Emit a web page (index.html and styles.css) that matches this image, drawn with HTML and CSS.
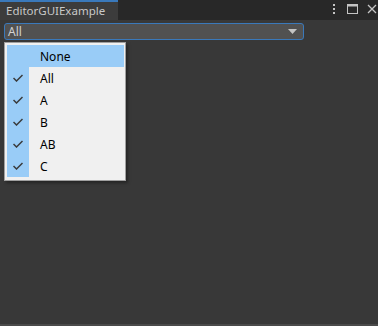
FILE: index.html
```html
<!DOCTYPE html>
<html lang="en">
<head>
    <meta charset="UTF-8">
    <meta name="viewport" content="width=device-width, initial-scale=1.0">
    <title>EditorGUIExample</title>
    <link rel="stylesheet" href="styles.css">
</head>
<body>
    <div class="window">
        <!-- Tab strip -->
        <div class="tabbar">
            <div class="tab">EditorGUIExample</div>
            <div class="tab-tools">
                <svg width="4" height="12" viewBox="0 0 4 12"><rect x="1" y="1" width="2" height="2" fill="#c4c4c4"/><rect x="1" y="5" width="2" height="2" fill="#c4c4c4"/><rect x="1" y="9" width="2" height="2" fill="#c4c4c4"/></svg>
                <svg width="11" height="10" viewBox="0 0 11 10"><rect x="0.5" y="0.5" width="10" height="9" fill="none" stroke="#c4c4c4"/><rect x="0.5" y="0.5" width="10" height="2" fill="#c4c4c4"/></svg>
                <svg width="10" height="10" viewBox="0 0 10 10"><path d="M1 1 L9 9 M9 1 L1 9" stroke="#c4c4c4" stroke-width="1.3"/></svg>
            </div>
        </div>

        <div class="content">
            <div class="dropdown">
                <span>All</span>
                <svg width="9" height="5" viewBox="0 0 9 5"><path d="M0 0 H9 L4.5 5 Z" fill="#c4c4c4"/></svg>
            </div>

            <!-- Open mask field menu -->
            <div class="menu">
                <div class="menu-inner">
                    <div class="item active"><span class="check"></span><span class="label">None</span></div>
                    <div class="item"><span class="check"><svg width="10" height="8" viewBox="0 0 10 8"><path d="M0.5 4 L3.5 7 L9.5 1" fill="none" stroke="#3a3a3a" stroke-width="1.5"/></svg></span><span class="label">All</span></div>
                    <div class="item"><span class="check"><svg width="10" height="8" viewBox="0 0 10 8"><path d="M0.5 4 L3.5 7 L9.5 1" fill="none" stroke="#3a3a3a" stroke-width="1.5"/></svg></span><span class="label">A</span></div>
                    <div class="item"><span class="check"><svg width="10" height="8" viewBox="0 0 10 8"><path d="M0.5 4 L3.5 7 L9.5 1" fill="none" stroke="#3a3a3a" stroke-width="1.5"/></svg></span><span class="label">B</span></div>
                    <div class="item"><span class="check"><svg width="10" height="8" viewBox="0 0 10 8"><path d="M0.5 4 L3.5 7 L9.5 1" fill="none" stroke="#3a3a3a" stroke-width="1.5"/></svg></span><span class="label">AB</span></div>
                    <div class="item"><span class="check"><svg width="10" height="8" viewBox="0 0 10 8"><path d="M0.5 4 L3.5 7 L9.5 1" fill="none" stroke="#3a3a3a" stroke-width="1.5"/></svg></span><span class="label">C</span></div>
                </div>
            </div>
        </div>
        <div class="bottom-edge"></div>
    </div>
</body>
</html>
```
FILE: styles.css
```css
body {
    margin: 0;
    background-color: #383838;
    font-family: "Noto Sans", "Liberation Sans", sans-serif;
    font-size: 12px;
}
.window {
    display: flex;
    flex-direction: column;
    height: 326px;
}
.tabbar {
    display: flex;
    height: 20px;
    background-color: #282828;
}
.tab {
    width: 112px;
    padding-left: 6px;
    background-color: #3c3c3c;
    border-top: 2px solid #3a79bb;
    color: #c8c8c8;
    font-size: 11.5px;
    line-height: 17px;
}
.tab-tools {
    margin-left: auto;
    display: flex;
    align-items: center;
    gap: 9px;
    padding-right: 1px;
    height: 17px;
}
.tab-tools svg:first-child {
    margin-right: 2px;
}
.content {
    flex: 1;
    position: relative;
    padding: 3px 74px 0 4px;
}
.dropdown {
    height: 15px;
    display: flex;
    align-items: center;
    justify-content: space-between;
    padding: 0 6px 0 3px;
    background-color: #515151;
    border: 1px solid #3a79bb;
    border-radius: 3px;
    color: #d2d2d2;
}
.menu {
    position: absolute;
    left: 4px;
    top: 22px;
    width: 117px;
    border: 1px solid #a0a0a0;
    background-color: #f0f0f0;
    box-shadow: 2px 2px 3px rgba(0, 0, 0, 0.35);
    padding: 2px 1px 3px 2px;
}
.menu-inner {
    display: flex;
    flex-direction: column;
}
.item {
    display: flex;
    height: 22px;
    align-items: center;
    color: #000;
    font-size: 12px;
}
.check {
    width: 22px;
    height: 22px;
    background-color: #99ccf7;
    display: flex;
    align-items: center;
    justify-content: center;
}
.label {
    padding-left: 11px;
}
.item.active {
    background-color: #99ccf7;
}
.bottom-edge {
    height: 2px;
    background-color: #4a4a4a;
}
```
